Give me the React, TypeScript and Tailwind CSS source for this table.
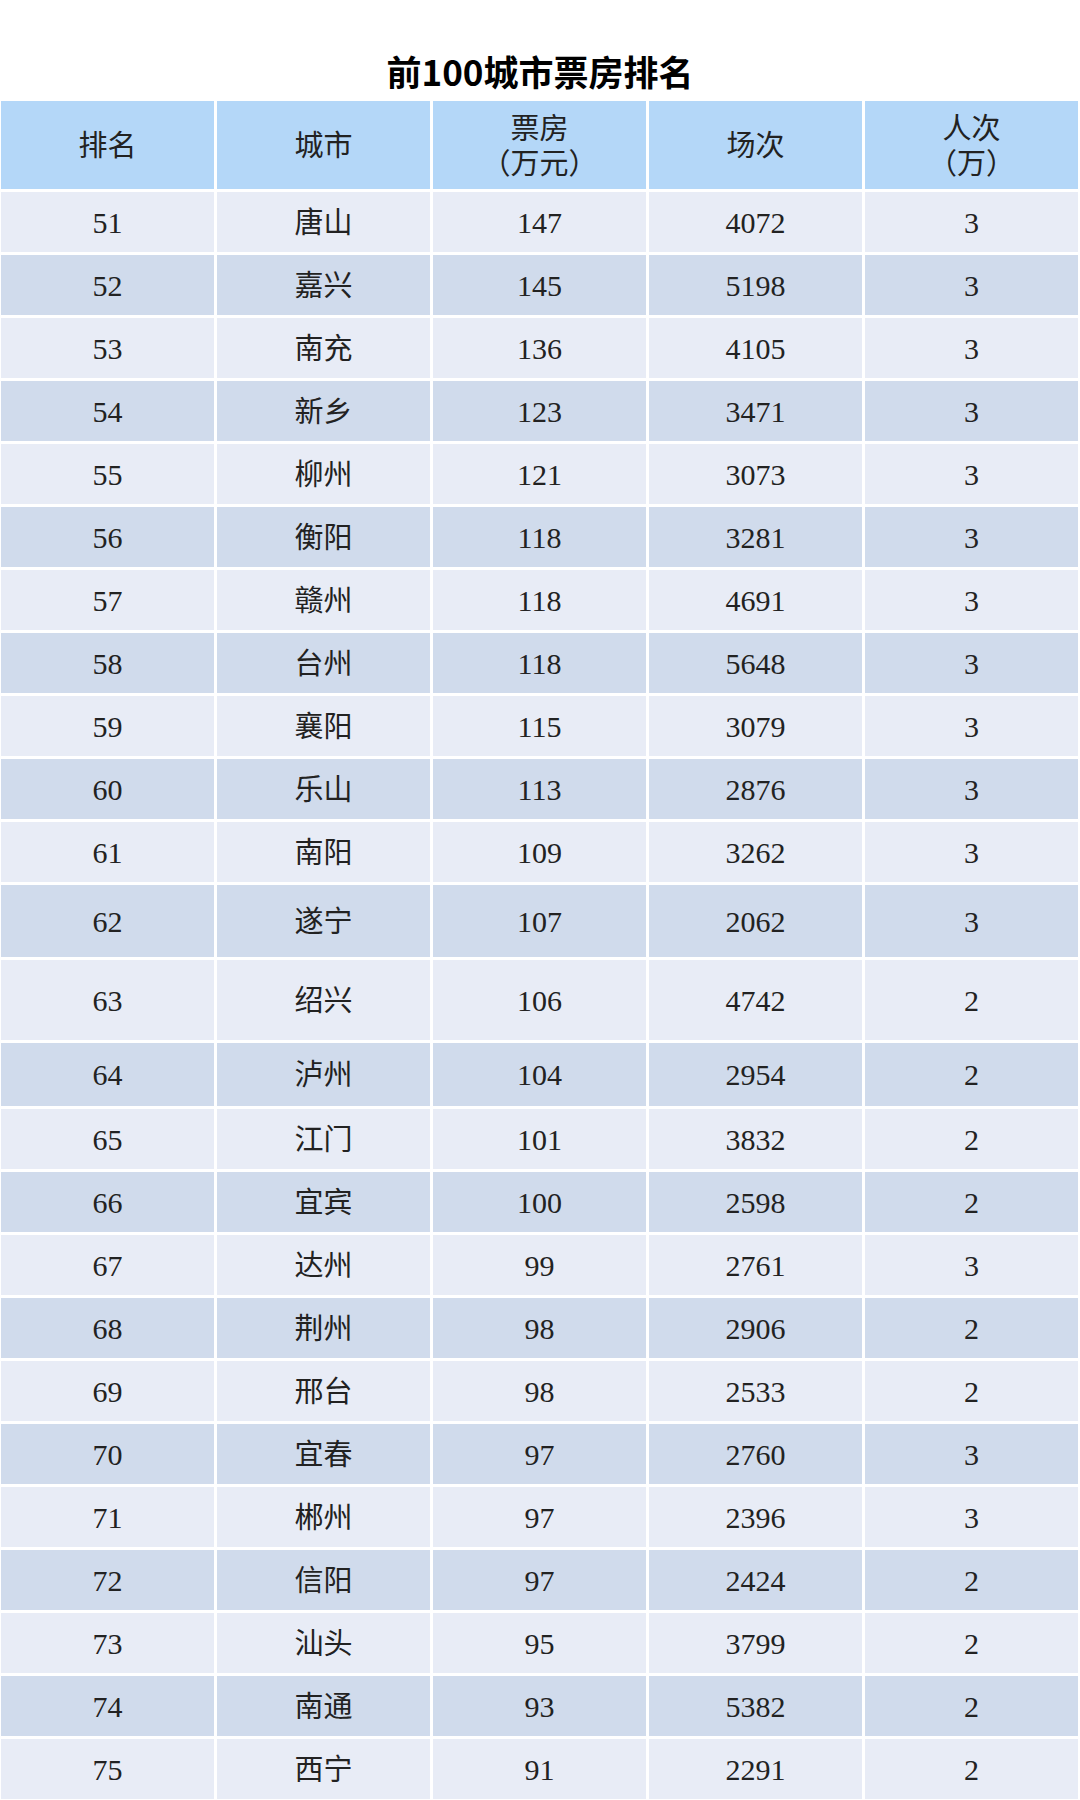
const rows = [
  { rank: 51, city: "唐山", box: 147, shows: 4072, people: 3, h: "h-[60px]" },
  { rank: 52, city: "嘉兴", box: 145, shows: 5198, people: 3, h: "h-[60px]" },
  { rank: 53, city: "南充", box: 136, shows: 4105, people: 3, h: "h-[60px]" },
  { rank: 54, city: "新乡", box: 123, shows: 3471, people: 3, h: "h-[60px]" },
  { rank: 55, city: "柳州", box: 121, shows: 3073, people: 3, h: "h-[60px]" },
  { rank: 56, city: "衡阳", box: 118, shows: 3281, people: 3, h: "h-[60px]" },
  { rank: 57, city: "赣州", box: 118, shows: 4691, people: 3, h: "h-[60px]" },
  { rank: 58, city: "台州", box: 118, shows: 5648, people: 3, h: "h-[60px]" },
  { rank: 59, city: "襄阳", box: 115, shows: 3079, people: 3, h: "h-[60px]" },
  { rank: 60, city: "乐山", box: 113, shows: 2876, people: 3, h: "h-[60px]" },
  { rank: 61, city: "南阳", box: 109, shows: 3262, people: 3, h: "h-[60px]" },
  { rank: 62, city: "遂宁", box: 107, shows: 2062, people: 3, h: "h-[72px]" },
  { rank: 63, city: "绍兴", box: 106, shows: 4742, people: 2, h: "h-[80px]" },
  { rank: 64, city: "泸州", box: 104, shows: 2954, people: 2, h: "h-[63px]" },
  { rank: 65, city: "江门", box: 101, shows: 3832, people: 2, h: "h-[60px]" },
  { rank: 66, city: "宜宾", box: 100, shows: 2598, people: 2, h: "h-[60px]" },
  { rank: 67, city: "达州", box: 99, shows: 2761, people: 3, h: "h-[60px]" },
  { rank: 68, city: "荆州", box: 98, shows: 2906, people: 2, h: "h-[60px]" },
  { rank: 69, city: "邢台", box: 98, shows: 2533, people: 2, h: "h-[60px]" },
  { rank: 70, city: "宜春", box: 97, shows: 2760, people: 3, h: "h-[60px]" },
  { rank: 71, city: "郴州", box: 97, shows: 2396, people: 3, h: "h-[60px]" },
  { rank: 72, city: "信阳", box: 97, shows: 2424, people: 2, h: "h-[60px]" },
  { rank: 73, city: "汕头", box: 95, shows: 3799, people: 2, h: "h-[60px]" },
  { rank: 74, city: "南通", box: 93, shows: 5382, people: 2, h: "h-[60px]" },
  { rank: 75, city: "西宁", box: 91, shows: 2291, people: 2, h: "h-[60px]" },
];

const serif = "font-['Liberation_Serif','Noto_Sans_CJK_SC',serif]";

function HeadCell({ children }: { children: React.ReactNode }) {
  return (
    <div className="flex flex-col items-center justify-center bg-[#b4d7f8] pt-[3px] text-[29px] leading-[35px]">
      {children}
    </div>
  );
}

export default function App() {
  return (
    <div className="w-[1080px] min-h-[1800px] bg-white text-[#222]">
      {/* 标题 */}
      <div className="pt-[49px] pb-[8px] text-center font-['Noto_Sans_CJK_SC',sans-serif] text-[35px] font-bold leading-[44px] text-black">
        前100城市票房排名
      </div>

      <div className={`ml-[1px] w-[1077px] flex flex-col gap-[3px] text-[30px] ${serif}`}>
        {/* 表头 */}
        <div className="grid h-[88px] grid-cols-5 gap-[3px]">
          <HeadCell>排名</HeadCell>
          <HeadCell>城市</HeadCell>
          <HeadCell>
            <span>票房</span>
            <span>（万元）</span>
          </HeadCell>
          <HeadCell>场次</HeadCell>
          <HeadCell>
            <span>人次</span>
            <span>（万）</span>
          </HeadCell>
        </div>

        {rows.map((r) => (
          <div
            key={r.rank}
            className={`grid grid-cols-5 gap-[3px] ${r.h} ${
              r.rank % 2 === 0 ? "[&>div]:bg-[#d0dbec]" : "[&>div]:bg-[#e8ecf6]"
            }`}
          >
            <div className="flex items-center justify-center">{r.rank}</div>
            <div className="flex items-center justify-center pt-[3px] text-[29px]">{r.city}</div>
            <div className="flex items-center justify-center">{r.box}</div>
            <div className="flex items-center justify-center">{r.shows}</div>
            <div className="flex items-center justify-center">{r.people}</div>
          </div>
        ))}
      </div>
    </div>
  );
}
